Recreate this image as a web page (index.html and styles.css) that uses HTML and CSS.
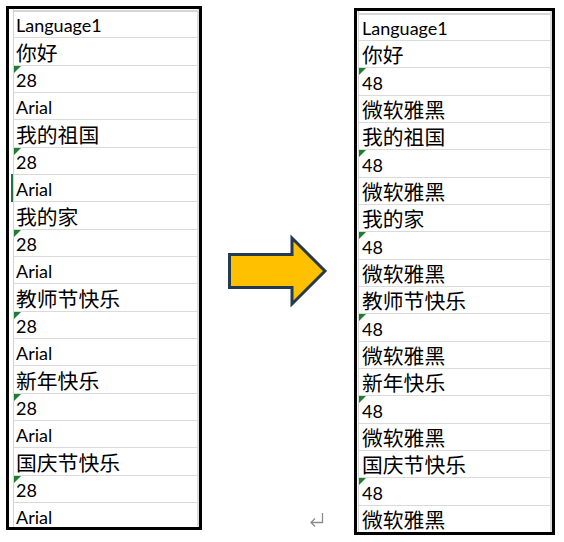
FILE: index.html
```html
<!DOCTYPE html>
<html lang="zh">
<head>
<meta charset="utf-8">
<link rel="stylesheet" href="styles.css">
</head>
<body>
<div class="page">
  <div class="sheet sheet-left">
    <div class="gutter"></div>
    <div class="col">
      <div class="topstrip"></div>
      <div class="row head">Language1</div>
      <div class="row cjk">你好</div>
      <div class="row num">28</div>
      <div class="row">Arial</div>
      <div class="row cjk">我的祖国</div>
      <div class="row num">28</div>
      <div class="row">Arial</div>
      <div class="row cjk">我的家</div>
      <div class="row num">28</div>
      <div class="row">Arial</div>
      <div class="row cjk">教师节快乐</div>
      <div class="row num">28</div>
      <div class="row">Arial</div>
      <div class="row cjk">新年快乐</div>
      <div class="row num">28</div>
      <div class="row">Arial</div>
      <div class="row cjk">国庆节快乐</div>
      <div class="row num">28</div>
      <div class="row">Arial</div>
    </div>
    <div class="selbar"></div>
  </div>

  <div class="mid">
    <svg class="arrow" width="104" height="76" viewBox="0 0 104 76">
      <polygon points="3.5,20.5 66,20.5 66,4 99,37 66,70 66,53.5 3.5,53.5" fill="#FFC000" stroke="#243a52" stroke-width="3" stroke-linejoin="miter"/>
    </svg>
    <svg class="ret" width="18" height="18" viewBox="0 0 18 18">
      <path d="M14.5 3 V12.5 H3 M7 8.5 L3 12.5 L7 16.5" fill="none" stroke="#8c8c8c" stroke-width="1.3"/>
    </svg>
  </div>

  <div class="sheet sheet-right">
    <div class="gutter"></div>
    <div class="col">
      <div class="topstrip"></div>
      <div class="row head">Language1</div>
      <div class="row cjk">你好</div>
      <div class="row num">48</div>
      <div class="row cjk">微软雅黑</div>
      <div class="row cjk">我的祖国</div>
      <div class="row num">48</div>
      <div class="row cjk">微软雅黑</div>
      <div class="row cjk">我的家</div>
      <div class="row num">48</div>
      <div class="row cjk">微软雅黑</div>
      <div class="row cjk">教师节快乐</div>
      <div class="row num">48</div>
      <div class="row cjk">微软雅黑</div>
      <div class="row cjk">新年快乐</div>
      <div class="row num">48</div>
      <div class="row cjk">微软雅黑</div>
      <div class="row cjk">国庆节快乐</div>
      <div class="row num">48</div>
      <div class="row cjk">微软雅黑</div>
    </div>
  </div>
</div>
</body>
</html>
```

FILE: styles.css
```css
html, body {
  margin: 0;
  padding: 0;
  background: #fff;
}
body {
  width: 564px;
  height: 542px;
  overflow: hidden;
  font-family: Lato, "Noto Sans CJK SC", sans-serif;
  color: #000;
}
.page {
  display: flex;
  align-items: flex-start;
  padding-left: 6px;
}
.sheet {
  position: relative;
  display: flex;
  border: 3px solid #000;
  background: #fff;
  overflow: hidden;
  flex-shrink: 0;
}
.sheet-left {
  margin-top: 6px;
  width: 190px;
  height: 518px;
}
.sheet-right {
  margin-top: 8px;
  width: 195px;
  height: 521px;
}
.gutter {
  flex-shrink: 0;
}
.sheet-left .gutter { width: 4px; }
.sheet-right .gutter { width: 1px; }
.col {
  flex: 1;
  display: flex;
  flex-direction: column;
  border-left: 1px solid #d2d2d2;
  border-right: 2px solid #dcdcdc;
  overflow: hidden;
}
.topstrip {
  flex-shrink: 0;
  height: 2px;
  background: #d6d6d6;
}
.sheet-left .topstrip { margin-top: 1px; }
.sheet-right .topstrip { margin-top: 2px; }
.row {
  position: relative;
  flex-shrink: 0;
  box-sizing: border-box;
  height: 27px;
  border-bottom: 1px solid #dadada;
  display: flex;
  align-items: flex-end;
  padding-bottom: 3px;
  font-size: 18px;
  line-height: 18px;
  white-space: nowrap;
}
.sheet-left .row { padding-left: 2px; }
.sheet-right .row { padding-left: 3px; }
.row.head { height: 26px; }
.row.cjk {
  height: 28px;
  font-family: "Noto Sans CJK SC", sans-serif;
  font-size: 20.8px;
  line-height: 20px;
  padding-bottom: 3px;
}
.sheet-right .row.cjk { height: 27px; }
.sheet-right .row.num { height: 28px; }
.row.num::before {
  content: "";
  position: absolute;
  left: 0;
  top: 0;
  border-top: 7px solid #1b7f2b;
  border-right: 7px solid transparent;
}
.selbar {
  position: absolute;
  left: 2px;
  top: 165px;
  width: 2px;
  height: 28px;
  background: #217346;
}
.mid {
  width: 152px;
  height: 542px;
  flex-shrink: 0;
  display: flex;
  flex-direction: column;
  align-items: flex-start;
}
.arrow {
  display: block;
  margin-top: 234px;
  margin-left: 24px;
}
.ret {
  display: block;
  margin-top: 200px;
  margin-left: 106px;
}
```
